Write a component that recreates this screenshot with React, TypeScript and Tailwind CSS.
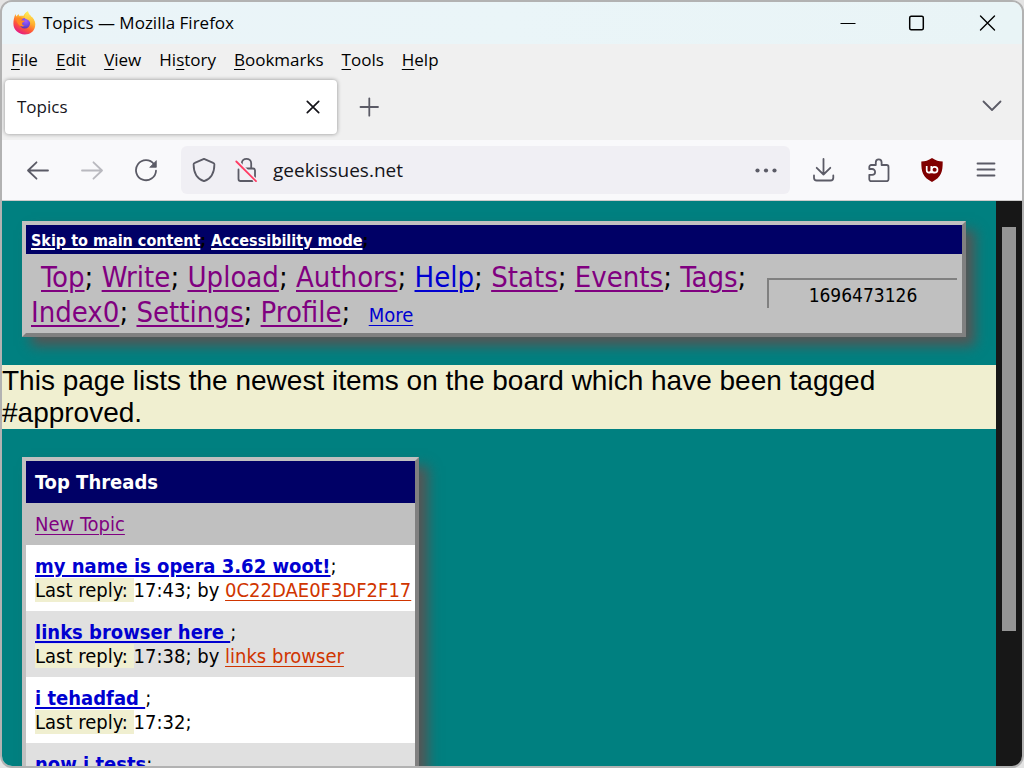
import type { ReactNode } from "react";

const chromeFont = "font-['Open_Sans','Noto_Sans',sans-serif]";
const pageFont = "font-['DejaVu_Sans_Condensed','DejaVu_Sans',sans-serif]";

type IconProps = { className?: string };

function FirefoxLogo() {
  return (
    <svg viewBox="0 0 24 24" className="size-6" aria-hidden="true">
      <defs>
        <linearGradient id="flame" x1="0.8" y1="0.1" x2="0.3" y2="1">
          <stop offset="0" stopColor="#fff44f" />
          <stop offset="0.35" stopColor="#ffb02e" />
          <stop offset="0.65" stopColor="#ff5a36" />
          <stop offset="1" stopColor="#e3158a" />
        </linearGradient>
        <radialGradient id="globe" cx="0.6" cy="0.3" r="0.8">
          <stop offset="0" stopColor="#a45cff" />
          <stop offset="0.6" stopColor="#6a45dd" />
          <stop offset="1" stopColor="#4a2fa8" />
        </radialGradient>
        <linearGradient id="tail" x1="0.5" y1="0" x2="0.5" y2="1">
          <stop offset="0" stopColor="#fff05a" />
          <stop offset="1" stopColor="#ffa42b" />
        </linearGradient>
      </defs>
      <path d="M16 .2c-.8 2.200.1 3.700 1.300 4.700l1-.3c.3.5.5 1 .6 1.500l1.500.3c2.400 2.500 3.500 5.500 2.700 9C22.200 20.200 18.200 23.400 12.800 23.400 6.400 23.400 1.400 18.700 1.400 12.800c0-3.500.6-6.800 2.200-9.800.1 1.100.4 1.900.9 2.600.6-1 1.200-1.900 2.100-2.700 0 1 .4 1.700 1 2.200 1.200-.5 2.600-.6 4-.3 1-2.400 2.200-3.600 4.400-4.600Z" fill="url(#flame)" />
      <circle cx="12.800" cy="12.200" r="5.300" fill="url(#globe)" />
      <path d="M16 .2c-1.800 1.500-3.600 4.200-3.400 6.400.1 1 1.200 1.400 2.500 1.900 2.500 1 4 3.200 3.300 6.100 1.300-1.500 1.300-3.400.6-4.900 1.700 1.200 2.800 3.200 2.900 5.600 1.500-4.600-.3-7.800-2.700-9.900C17.900 4 16.400 2.500 16 .2Z" fill="url(#tail)" />
      <path d="M4.400 7.600c1.600-1.600 4.900-1.300 6.700.1L9.200 9.200c1.500.2 2.600.3 3.500.5-.2 1-1.500 1.500-2.400 2-.6 1.800.6 3.100 2.500 3.100-2.500 1.800-8 .3-8.400-7.200Z" fill="#ff8a24" />
    </svg>
  );
}

function Glyph({ children, className }: IconProps & { children: ReactNode }) {
  return (
    <svg viewBox="0 0 24 24" fill="none" stroke="currentColor" strokeWidth="1.800" strokeLinecap="round" strokeLinejoin="round" className={className ?? "size-6"} aria-hidden="true">
      {children}
    </svg>
  );
}

const menus: [string, string, string][] = [
  ["", "F", "ile"],
  ["", "E", "dit"],
  ["", "V", "iew"],
  ["Hi", "s", "tory"],
  ["", "B", "ookmarks"],
  ["", "T", "ools"],
  ["", "H", "elp"],
];

function TitleBar() {
  return (
    <div className="flex h-[42px] shrink-0 items-center bg-gradient-to-r from-[#eaf4f8] via-[#eaf5f8] to-[#e9f4f6] pb-px pl-[10px]">
      <FirefoxLogo />
      <span className="ml-[7px] flex-1 text-[17px] leading-6 text-black">Topics — Mozilla Firefox</span>
      <div className="flex text-black">
        <button aria-label="Minimize" className="flex h-10 w-[69px] items-center justify-center">
          <Glyph><path d="M4.500 12.500h15" strokeWidth="1.200" strokeLinecap="butt" /></Glyph>
        </button>
        <button aria-label="Maximize" className="flex h-10 w-[70px] items-center justify-center">
          <Glyph><rect x="4.700" y="5.200" width="13.600" height="13.600" rx="1.500" strokeWidth="1.500" /></Glyph>
        </button>
        <button aria-label="Close" className="flex h-10 w-[70px] items-center justify-center">
          <Glyph><path d="m5.500 5 14 14M19.500 5l-14 14" strokeWidth="1.400" /></Glyph>
        </button>
      </div>
    </div>
  );
}

function MenuBar() {
  return (
    <nav className="flex h-[31px] shrink-0 items-center gap-[18px] pl-[9px] text-[17px] leading-6 text-black">
      {menus.map(([before, key, after]) => (
        <button key={key + after} className="whitespace-nowrap">
          {before}
          <span className="underline decoration-1 underline-offset-[3px]">{key}</span>
          {after}
        </button>
      ))}
    </nav>
  );
}

function TabStrip() {
  return (
    <div className="flex h-[65px] shrink-0 items-start pl-[3px] pt-[5px] text-[#5b5b66]">
      <div className="flex h-[54px] w-[332px] items-center rounded bg-white pl-3 pr-3 shadow-[0_0_4px_rgba(0,0,0,0.4)]">
        <button role="tab" aria-selected="true" className="flex-1 text-left text-[17px] leading-6 text-[#15141a]">
          Topics
        </button>
        <button aria-label="Close tab" className="text-[#15141a]">
          <Glyph><path d="m6.300 6.300 11.400 11.400M17.700 6.300 6.300 17.700" strokeWidth="1.700" /></Glyph>
        </button>
      </div>
      <button aria-label="New tab" className="ml-5 flex h-[54px] items-center">
        <Glyph><path d="M3.500 12h17.500M12.300 3.300v17.400" /></Glyph>
      </button>
      <button aria-label="List all tabs" className="ml-auto mr-[18px] flex h-[52px] items-center">
        <Glyph><path d="m3.500 7.500 8.500 8.500L20.500 7.500" /></Glyph>
      </button>
    </div>
  );
}

function NavBar() {
  return (
    <div className="flex h-[61px] shrink-0 items-center border-b border-[#cccccc] bg-[#f9f9fb] pl-6 text-[#5b5b66]">
      <button aria-label="Back">
        <Glyph><path d="M2 12.500h20M10.500 4.300 2 12.500l8.500 8.200" /></Glyph>
      </button>
      <button aria-label="Forward" disabled className="ml-[30px] opacity-40">
        <Glyph><path d="M2 12.500h20M13.500 4.300 22 12.500l-8.500 8.200" /></Glyph>
      </button>
      <button aria-label="Reload" className="ml-[30px]">
        <Glyph>
          <path d="M20 6.200A10 10 0 1 0 22 12.700" />
          <path d="M22.300 3v6.300h-6.200Z" fill="currentColor" strokeWidth="0.800" />
        </Glyph>
      </button>
      <div className="ml-[23px] flex h-12 min-w-0 flex-1 items-center rounded-md bg-[#f0eff4] pl-[11px] pr-3">
        <button aria-label="Tracking protection">
          <Glyph><path d="M12 .9 21.200 4.800c.8.300 1.200.7 1.200 1.400 0 7.300-2.800 14.400-10.400 17C4.400 20.600 1.600 13.500 1.600 6.200c0-.7.400-1.100 1.200-1.400Z" /></Glyph>
        </button>
        <button aria-label="Connection is not secure" className="ml-[18px]">
          <Glyph>
            <path d="M7.800 10V5.400c0-6 9.400-6 9.400 0V10M4.500 11.500v9.500a2 2 0 0 0 2 2h12M11 10.500h8a2 2 0 0 1 2 2v7" />
            <path d="m3 3.500 19 19.500" stroke="#f0eff4" strokeWidth="4" />
            <path d="m2.300 3.500 19.700 19.700" stroke="#ff3b63" strokeWidth="1.800" />
          </Glyph>
        </button>
        <input aria-label="Address" defaultValue="geekissues.net" className="ml-[15px] min-w-0 flex-1 bg-transparent text-[19px] leading-7 text-[#15141a] outline-none" />
        <button aria-label="Page actions">
          <svg viewBox="0 0 24 24" fill="currentColor" className="size-6" aria-hidden="true">
            <circle cx="3.500" cy="12.500" r="2.100" />
            <circle cx="12" cy="12.500" r="2.100" />
            <circle cx="20.500" cy="12.500" r="2.100" />
          </svg>
        </button>
      </div>
      <button aria-label="Downloads" className="ml-[22px]">
        <Glyph><path d="M11.500 1v15.500M4.700 9.800l6.800 6.700 6.800-6.700M2 17.500v2.200A2.800 2.800 0 0 0 4.800 22.500h13.700a2.800 2.800 0 0 0 2.800-2.800v-2.200" /></Glyph>
      </button>
      <button aria-label="Extensions" className="ml-[31px]">
        <Glyph><path d="M8.800 7V4.200a2.900 2.900 0 0 1 5.800 0V7h5a1.900 1.900 0 0 1 1.900 1.900v12.400a1.900 1.900 0 0 1-1.900 1.900H4.200a1.900 1.900 0 0 1-1.900-1.900v-4.500h2.900a2.900 2.900 0 0 0 0-5.800H2.300V8.900A1.900 1.900 0 0 1 4.200 7Z" /></Glyph>
      </button>
      <button aria-label="uBlock Origin" className="ml-[29px]">
        <svg viewBox="0 0 24 24" className="size-6" aria-hidden="true">
          <path d="M12 0c3.500 2.500 7 3.500 10.700 3.500C22.700 14 21.500 19 12 24 2.500 19 1.300 14 1.300 3.500 5 3.500 8.500 2.500 12 0Z" fill="#800000" />
          <path d="M6.700 8v4.300a2.300 2.300 0 0 0 4.600 0V8" fill="none" stroke="#fff" strokeWidth="1.700" />
          <path d="M9 14.500h5.500" stroke="#fff" strokeWidth="1.500" />
          <circle cx="14.600" cy="11.700" r="2.900" fill="none" stroke="#fff" strokeWidth="1.700" />
        </svg>
      </button>
      <button aria-label="Open application menu" className="ml-[30px] mr-6">
        <Glyph><path d="M3.500 5.500h17M3.500 11.500h17M3.500 17.500h17" /></Glyph>
      </button>
    </div>
  );
}

const navLinks = [
  { label: "Top", tone: "text-[#800080]" },
  { label: "Write", tone: "text-[#800080]" },
  { label: "Upload", tone: "text-[#800080]" },
  { label: "Authors", tone: "text-[#800080]" },
  { label: "Help", tone: "text-[#0000d0]" },
  { label: "Stats", tone: "text-[#800080]" },
  { label: "Events", tone: "text-[#800080]" },
  { label: "Tags", tone: "text-[#800080]" },
  { label: "Index0", tone: "text-[#800080]" },
  { label: "Settings", tone: "text-[#800080]" },
  { label: "Profile", tone: "text-[#800080]" },
];

function SiteMenu() {
  return (
    <header className="ml-5 mr-[30px] mt-5 border-4 border-b-[#808080] border-l-[#c0c0c0] border-r-[#808080] border-t-[#c0c0c0] bg-[#c0c0c0] shadow-[9px_9px_12px_#555]">
      <div className="h-[29px] bg-[#000066] px-[5px] pt-1 text-[16px] font-bold leading-6 text-black">
        <a href="#main" className="text-white underline decoration-2 underline-offset-2">Skip to main content</a>;{" "}
        <a href="#accessibility" className="text-white underline decoration-2 underline-offset-2">Accessibility mode</a>;
      </div>
      <div className="flex items-start px-[5px] pb-[3px] pt-[6px]">
        <nav className="min-w-0 flex-1 text-[29px] leading-[35px] text-black">
          <span className="pl-[10px]" />
          {navLinks.map(({ label, tone }) => (
            <span key={label}>
              <a href={"#" + label} className={tone + " underline decoration-2 underline-offset-[3px]"}>{label}</a>;{" "}
            </span>
          ))}
          <a href="#more" className="ml-[10px] text-[20px] leading-6 text-[#0000d0] underline decoration-1 underline-offset-[3px]">More</a>
        </nav>
        <div className="mt-[18px] h-[30px] w-[190px] border-l-2 border-t-2 border-[#808080] pt-[3px] text-center text-[19px] leading-6 text-black">
          1696473126
        </div>
      </div>
    </header>
  );
}

const threads = [
  { title: "my name is opera 3.62 woot!", time: "17:43", author: "0C22DAE0F3DF2F17" },
  { title: "links browser here ", time: "17:38", author: "links browser" },
  { title: "i tehadfad ", time: "17:32", author: "" },
  { title: "now i tests", time: "17:28", author: "" },
];

function ThreadTable() {
  return (
    <table className="ml-5 mt-7 w-[397px] border-separate border-spacing-0 border-4 border-b-[#808080] border-l-[#c0c0c0] border-r-[#808080] border-t-[#c0c0c0] bg-[#c0c0c0] text-[20px] leading-6 text-black shadow-[9px_9px_12px_#555]">
      <thead>
        <tr>
          <th className="bg-[#000066] p-[9px] text-left font-bold text-white">Top Threads</th>
        </tr>
      </thead>
      <tbody>
        <tr>
          <td className="p-[9px]">
            <a href="#new" className="text-[#800080] underline decoration-1 underline-offset-[3px]">New Topic</a>
          </td>
        </tr>
        {threads.map(({ title, time, author }) => (
          <tr key={title} className="odd:bg-[#e0e0e0] even:bg-white">
            <td className="whitespace-nowrap py-[9px] pl-[9px] pr-1">
              <a href="#thread" className="whitespace-pre font-bold text-[#0000d0] underline decoration-2 underline-offset-2">{title}</a>;
              <br />
              <span className="whitespace-pre bg-[#f0efd0]">Last reply: </span>
              {time};
              {author && (
                <>
                  {" by "}
                  <a href="#author" className="text-[#d03500] underline decoration-1 underline-offset-[3px]">{author}</a>
                </>
              )}
            </td>
          </tr>
        ))}
      </tbody>
    </table>
  );
}

export default function App() {
  return (
    <div className="h-screen bg-[#e4e4e4]">
      <div className={"flex h-full flex-col overflow-hidden rounded-xl border-2 border-[#b2b2b2] bg-[#f0f0f0] " + chromeFont}>
        <TitleBar />
        <MenuBar />
        <TabStrip />
        <NavBar />
        <div className="flex min-h-0 flex-1">
          <main id="main" className={"min-w-0 flex-1 overflow-hidden bg-[#008080] " + pageFont}>
            <SiteMenu />
            <p className="relative mt-7 bg-[#f0efd0] font-['Liberation_Sans',Arial,sans-serif] text-[28px] leading-8 text-black">
              This page lists the newest items on the board which have been tagged #approved.
            </p>
            <ThreadTable />
          </main>
          <div className="w-[26px] shrink-0 bg-[#171717] px-[6px] pt-[26px]">
            <div className="h-[75%] bg-[#959595]" />
          </div>
        </div>
      </div>
    </div>
  );
}
